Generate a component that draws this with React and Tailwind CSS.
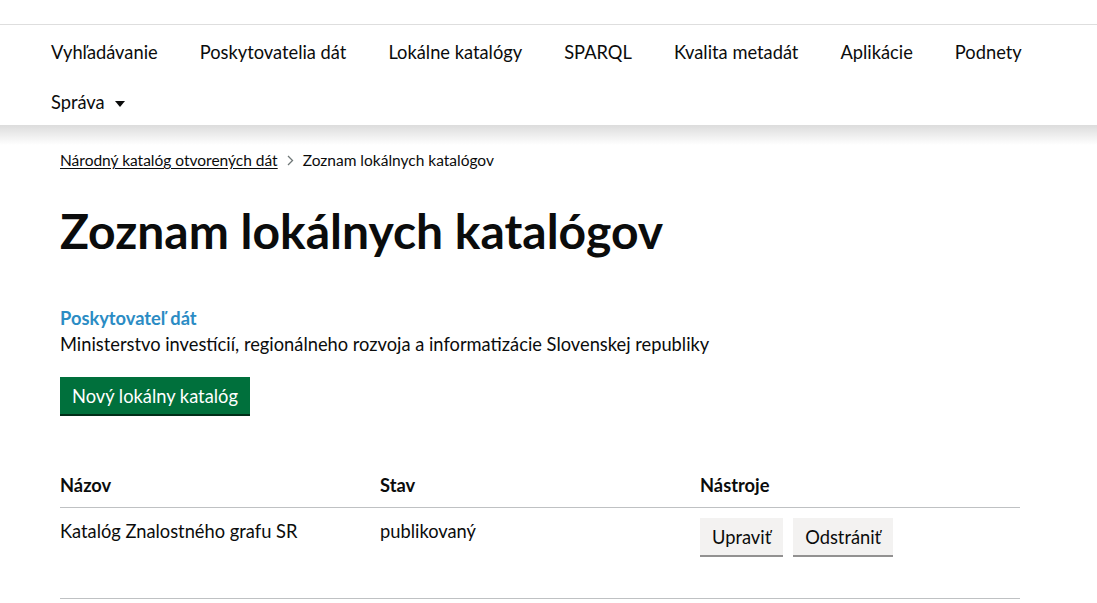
import React from 'react';

const navItems = ['Vyhľadávanie', 'Poskytovatelia dát', 'Lokálne katalógy', 'SPARQL', 'Kvalita metadát', 'Aplikácie', 'Podnety'];

const font = { fontFamily: 'Lato, "Noto Sans", sans-serif' };

export default function App() {
  return (
    <div className="min-h-screen bg-white text-[#0b0c0c]" style={font}>
      {/* top strip */}
      <div className="h-[25px] border-b border-[#dedede]" />

      {/* navigation */}
      <header className="bg-white">
        <nav className="pl-[51px] pt-[4px]">
          <ul className="flex h-[48px] items-center gap-x-[42px] text-[18.3px]">
            {navItems.map((item) => (
              <li key={item} className="whitespace-nowrap">{item}</li>
            ))}
          </ul>
          <div className="flex h-[48px] items-center pt-[4px] text-[18.3px]">
            <span>Správa</span>
            <svg className="ml-[10px] mt-[2px]" width="10" height="6" viewBox="0 0 10 6">
              <path d="M0 0h10L5 6z" fill="#0b0c0c" />
            </svg>
          </div>
        </nav>
      </header>
      <div className="h-[20px] bg-gradient-to-b from-[#dcdcdc] to-white" />

      <main className="px-[60px]">
        {/* breadcrumb */}
        <div className="flex items-center pt-[5px] text-[15.5px] leading-[20px]">
          <a className="underline underline-offset-2">Národný katalóg otvorených dát</a>
          <svg className="mx-[9px]" width="7" height="11" viewBox="0 0 7 11">
            <path d="M1 1l4.5 4.5L1 10" fill="none" stroke="#6f7777" strokeWidth="1.3" />
          </svg>
          <span>Zoznam lokálnych katalógov</span>
        </div>

        <h1 className="mt-[36px] text-[48px] font-bold leading-[50px]">Zoznam lokálnych katalógov</h1>

        <div className="mt-[49px] text-[18.3px] leading-[26px]">
          <div className="font-bold text-[#2b8cc4]">Poskytovateľ dát</div>
          <div>Ministerstvo investícií, regionálneho rozvoja a informatizácie Slovenskej republiky</div>
        </div>

        <button className="mt-[20px] bg-[#00703c] px-[12px] pb-[7px] pt-[8px] text-[18.3px] leading-[22px] text-white shadow-[0_2px_0_#002d18]">
          Nový lokálny katalóg
        </button>

        {/* table */}
        <table className="mt-[58px] w-[960px] border-collapse text-left text-[18.3px]">
          <thead>
            <tr className="border-b border-[#bfc1c3]">
              <th className="w-[320px] pb-[9px] font-bold leading-[26px]">Názov</th>
              <th className="w-[320px] pb-[9px] font-bold leading-[26px]">Stav</th>
              <th className="pb-[9px] font-bold leading-[26px]">Nástroje</th>
            </tr>
          </thead>
          <tbody>
            <tr className="border-b border-[#bfc1c3]">
              <td className="h-[91px] pt-[10px] align-top leading-[26px]">Katalóg Znalostného grafu SR</td>
              <td className="pt-[10px] align-top leading-[26px]">publikovaný</td>
              <td className="pt-[10px] align-top">
                <div className="flex gap-[10px]">
                  <button className="bg-[#f3f2f1] px-[12px] pb-[7px] pt-[8px] leading-[22px] shadow-[0_2px_0_#929191]">Upraviť</button>
                  <button className="bg-[#f3f2f1] px-[12px] pb-[7px] pt-[8px] leading-[22px] shadow-[0_2px_0_#929191]">Odstrániť</button>
                </div>
              </td>
            </tr>
          </tbody>
        </table>
      </main>
    </div>
  );
}
